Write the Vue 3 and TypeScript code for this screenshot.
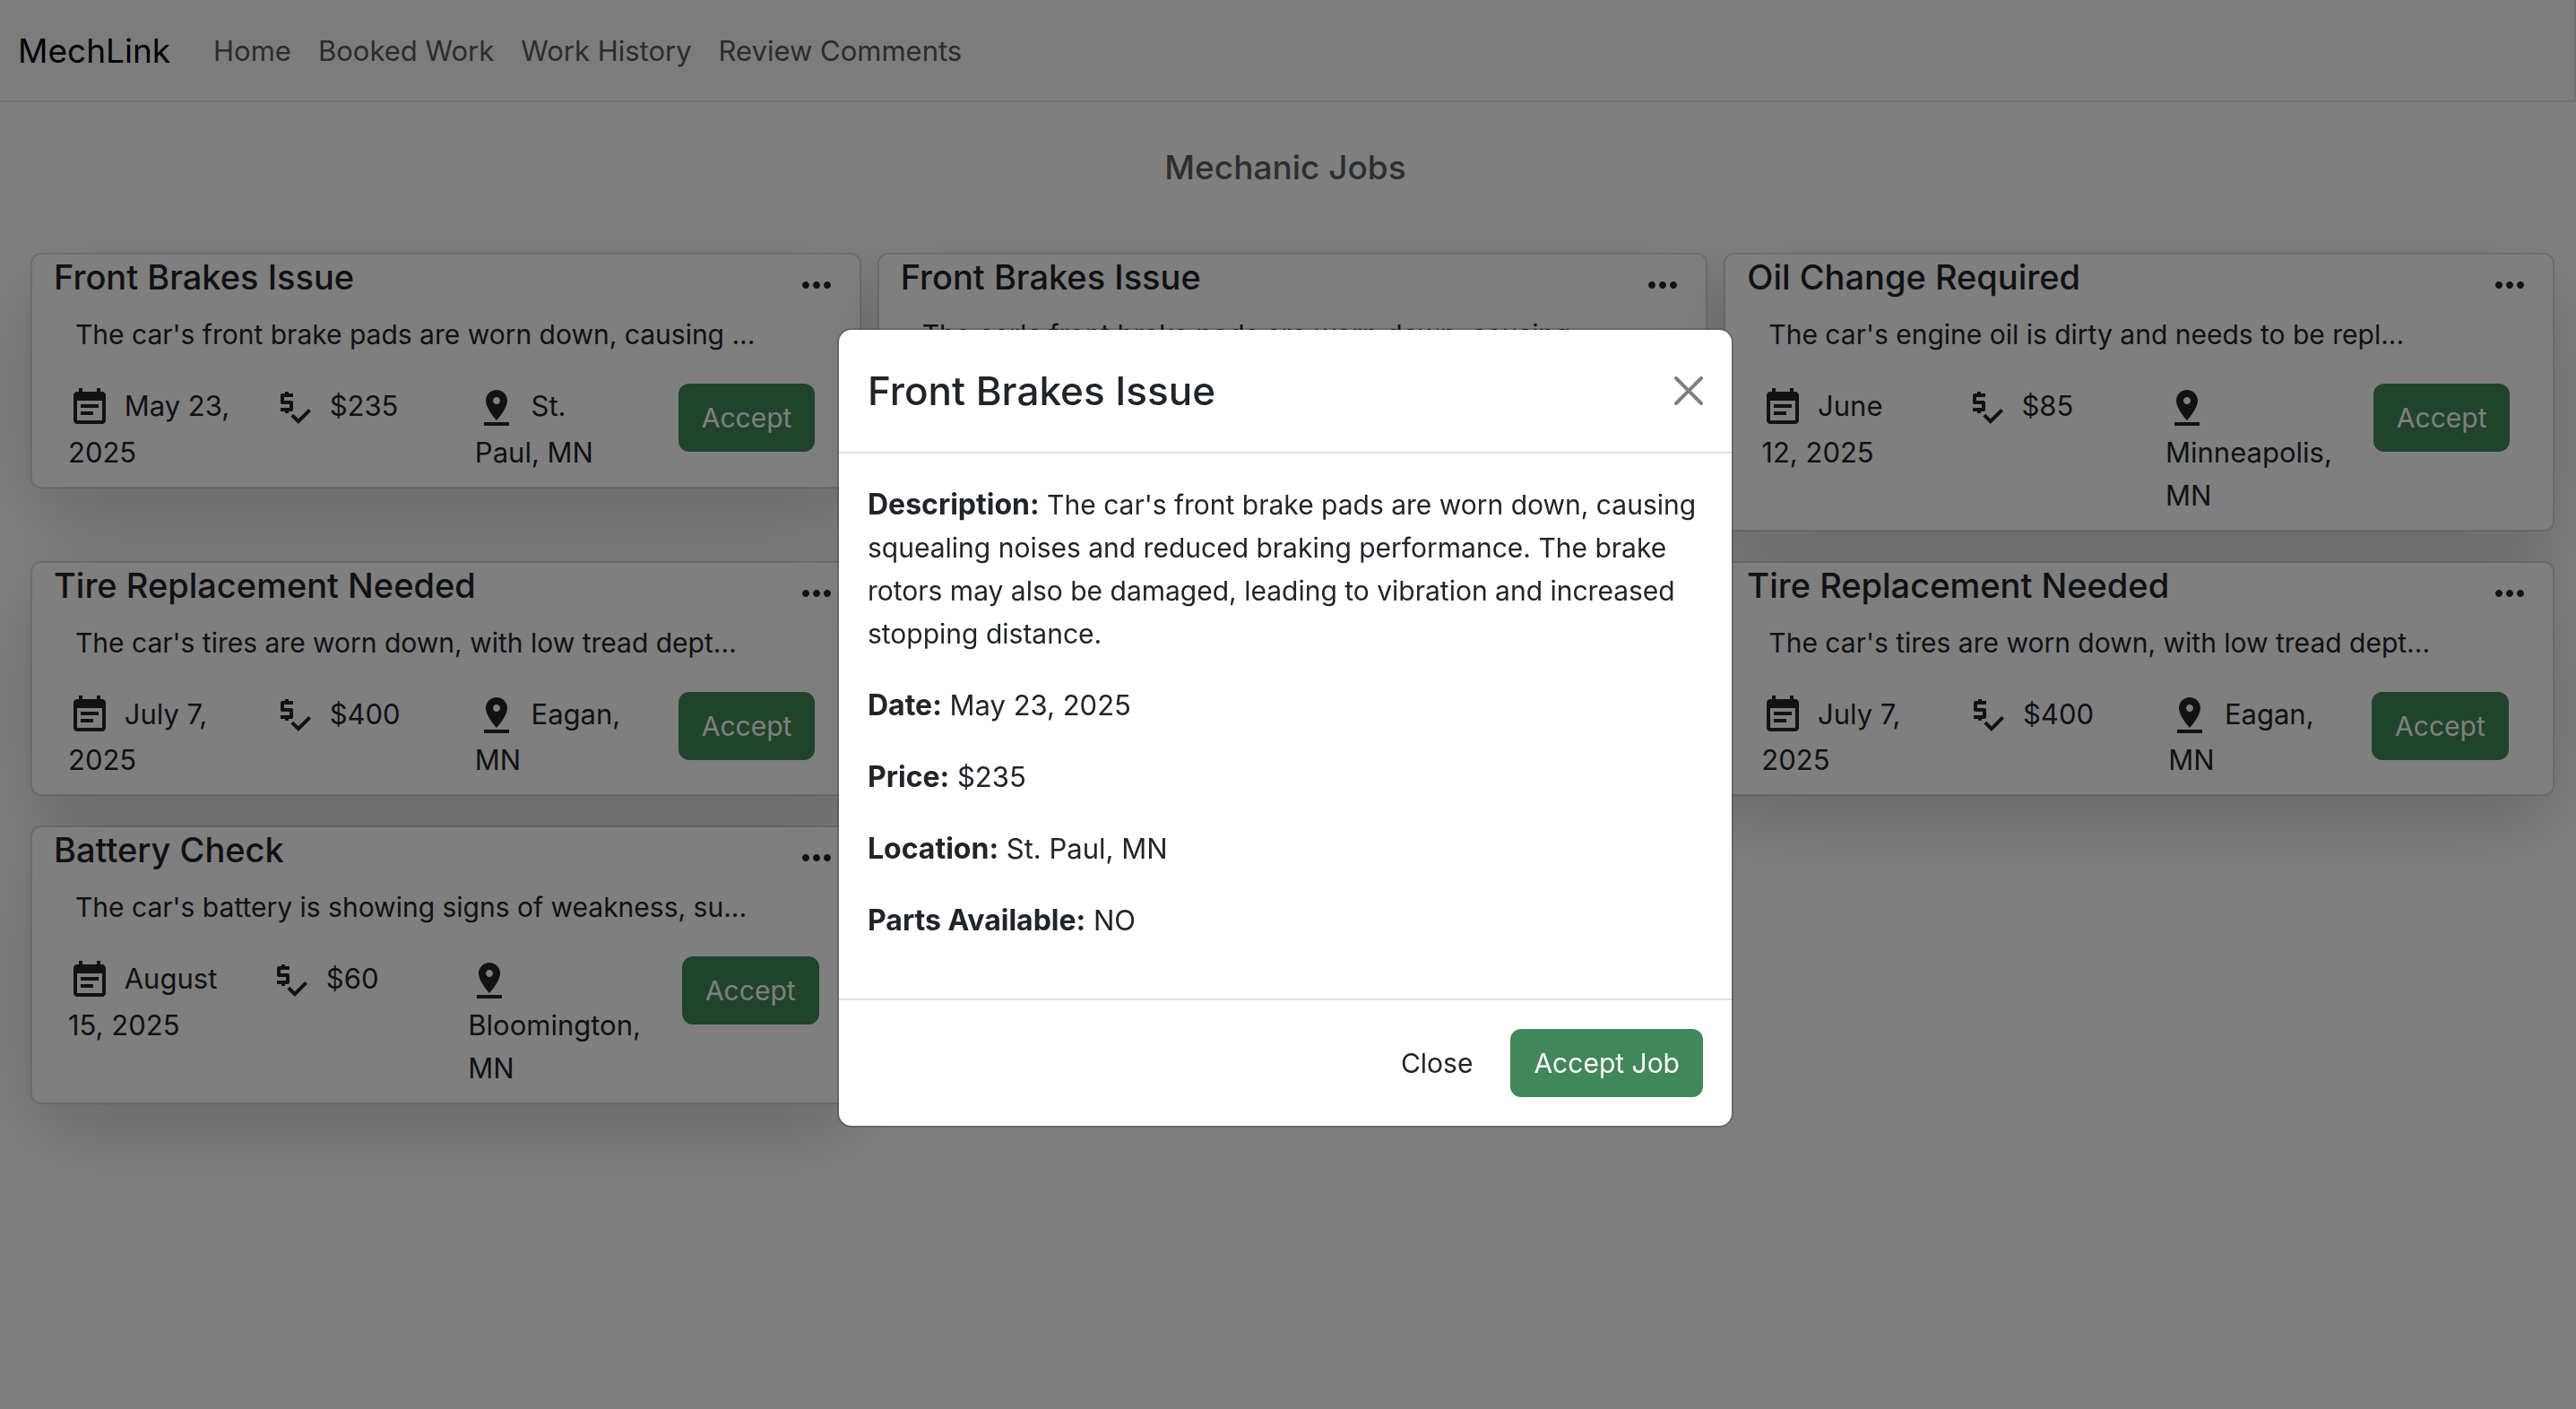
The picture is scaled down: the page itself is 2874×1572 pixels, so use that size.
<script setup lang="ts">
import { ref } from 'vue'

interface Job {
  id: number
  title: string
  summary: string
  date: string
  price: string
  location: string
}

const links: string[] = ['Home', 'Booked Work', 'Work History', 'Review Comments']

const brakes = "The car's front brake pads are worn down, causing ..."
const tires = "The car's tires are worn down, with low tread dept..."

const jobs: Job[] = [
  { id: 1, title: 'Front Brakes Issue', summary: brakes, date: 'May 23, 2025', price: '$235', location: 'St. Paul, MN' },
  { id: 2, title: 'Front Brakes Issue', summary: brakes, date: 'May 23, 2025', price: '$235', location: 'St. Paul, MN' },
  { id: 3, title: 'Oil Change Required', summary: "The car's engine oil is dirty and needs to be repl...", date: 'June 12, 2025', price: '$85', location: 'Minneapolis, MN' },
  { id: 4, title: 'Tire Replacement Needed', summary: tires, date: 'July 7, 2025', price: '$400', location: 'Eagan, MN' },
  { id: 5, title: 'Tire Replacement Needed', summary: tires, date: 'July 7, 2025', price: '$400', location: 'Eagan, MN' },
  { id: 6, title: 'Tire Replacement Needed', summary: tires, date: 'July 7, 2025', price: '$400', location: 'Eagan, MN' },
  { id: 7, title: 'Battery Check', summary: "The car's battery is showing signs of weakness, su...", date: 'August 15, 2025', price: '$60', location: 'Bloomington, MN' },
]

const details: { label: string; value: string }[] = [
  {
    label: 'Description:',
    value:
      "The car's front brake pads are worn down, causing squealing noises and reduced braking performance. The brake rotors may also be damaged, leading to vibration and increased stopping distance.",
  },
  { label: 'Date:', value: 'May 23, 2025' },
  { label: 'Price:', value: '$235' },
  { label: 'Location:', value: 'St. Paul, MN' },
  { label: 'Parts Available:', value: 'NO' },
]

const open = ref(true)
</script>

<template>
  <div class="page">
    <nav class="navbar">
      <a class="brand" href="#">MechLink</a>
      <a v-for="link in links" :key="link" class="nav-link" href="#">{{ link }}</a>
    </nav>

    <main>
      <h1 class="heading">Mechanic Jobs</h1>
      <section class="jobs">
        <article v-for="job in jobs" :key="job.id" class="card">
          <header class="card-head">
            <h2 class="card-title">{{ job.title }}</h2>
            <button class="more" type="button" aria-label="Details" @click="open = true">
              <svg class="icon" viewBox="0 0 24 24" aria-hidden="true">
                <path d="M6 10c-1.1 0-2 .9-2 2s.9 2 2 2 2-.9 2-2-.9-2-2-2zm12 0c-1.1 0-2 .9-2 2s.9 2 2 2 2-.9 2-2-.9-2-2-2zm-6 0c-1.1 0-2 .9-2 2s.9 2 2 2 2-.9 2-2-.9-2-2-2z" />
              </svg>
            </button>
          </header>
          <p class="summary">{{ job.summary }}</p>
          <div class="facts">
            <div class="fact date">
              <svg class="icon" viewBox="0 0 24 24" aria-hidden="true">
                <path d="M17 10H7v2h10v-2zm2-7h-1V1h-2v2H8V1H6v2H5c-1.11 0-1.99.9-1.99 2L3 19c0 1.1.89 2 2 2h14c1.1 0 2-.9 2-2V5c0-1.1-.9-2-2-2zm0 16H5V8h14v11zm-5-5H7v2h7v-2z" />
              </svg>
              {{ job.date }}
            </div>
            <div class="fact price">
              <svg class="icon" viewBox="0 0 24 24" aria-hidden="true">
                <path d="M11 13V9c0-.55-.45-1-1-1H6V6h5V4H8.5V3h-2v1H5c-.55 0-1 .45-1 1v4c0 .55.45 1 1 1h4v2H4v2h2.5v1h2v-1H10c.55 0 1-.45 1-1zm8.59-.48-5.66 5.65-2.83-2.83-1.41 1.42L13.93 21 21 13.93l-1.41-1.41z" />
              </svg>
              {{ job.price }}
            </div>
            <div class="fact location">
              <svg class="icon" viewBox="0 0 24 24" aria-hidden="true">
                <path d="M18 8c0-3.31-2.69-6-6-6S6 4.69 6 8c0 4.5 6 11 6 11s6-6.5 6-11zm-8 0c0-1.1.9-2 2-2s2 .9 2 2-.89 2-2 2c-1.1 0-2-.9-2-2zM5 20v2h14v-2H5z" />
              </svg>
              {{ job.location }}
            </div>
            <div class="action">
              <button class="btn success" type="button">Accept</button>
            </div>
          </div>
        </article>
      </section>
    </main>

    <div v-if="open" class="backdrop">
      <div class="modal" role="dialog" aria-modal="true" aria-labelledby="job-title">
        <header class="modal-head">
          <h2 id="job-title" class="modal-title">Front Brakes Issue</h2>
          <button class="close" type="button" aria-label="Close" @click="open = false">
            <svg viewBox="0 0 16 16" aria-hidden="true">
              <path d="M.293.293a1 1 0 0 1 1.414 0L8 6.586 14.293.293a1 1 0 1 1 1.414 1.414L9.414 8l6.293 6.293a1 1 0 0 1-1.414 1.414L8 9.414l-6.293 6.293a1 1 0 0 1-1.414-1.414L6.586 8 .293 1.707a1 1 0 0 1 0-1.414z" />
            </svg>
          </button>
        </header>
        <div class="modal-body">
          <p v-for="d in details" :key="d.label"><strong>{{ d.label }}</strong> {{ d.value }}</p>
        </div>
        <footer class="modal-foot">
          <button class="btn" type="button" @click="open = false">Close</button>
          <button class="btn success" type="button">Accept Job</button>
        </footer>
      </div>
    </div>
  </div>
</template>

<style>
body {
  margin: 0;
  background: #fff;
}
</style>

<style scoped>
.page {
  min-height: 100vh;
  font-family: Inter, 'Liberation Sans', sans-serif;
  font-size: 31px;
  line-height: 48px;
  color: #212529;
}

.page *,
.page {
  box-sizing: border-box;
}

h1,
h2,
p {
  margin: 0;
}

button {
  font: inherit;
  color: inherit;
  cursor: pointer;
}

.navbar {
  display: flex;
  align-items: center;
  gap: 30px;
  height: 114px;
  padding: 2px 0 0 20px;
  background: #f8f8f8;
  border-right: 2px solid #e2e2e2;
  border-bottom: 2px solid #e2e2e2;
}

.brand {
  margin-right: 18px;
  font-size: 37px;
  color: #000;
  text-decoration: none;
}

.nav-link {
  color: #595959;
  text-decoration: none;
}

.heading {
  padding: 49px 6px 49px 0;
  font-size: 37px;
  font-weight: 500;
  line-height: 48px;
  text-align: center;
  color: #5a5d60;
}

.jobs {
  display: grid;
  grid-template-columns: repeat(3, 1fr);
  align-items: start;
  gap: 33px 18px;
  padding: 22px 24px 40px 34px;
}

.card {
  position: relative;
  min-width: 0;
  padding: 1px 0 14px;
  background: #fff;
  background-clip: padding-box;
  border: 2px solid rgba(0, 0, 0, 0.125);
  border-radius: 12px;
  box-shadow: 0 32px 96px rgba(0, 0, 0, 0.175);
}

.card-head {
  display: flex;
  justify-content: space-between;
  height: 64px;
  padding: 0 24px;
}

.card-title {
  font-size: 38px;
  font-weight: 500;
  line-height: 48px;
}

.more {
  height: 48px;
  margin-top: 9px;
  padding: 0;
  border: 0;
  background: none;
}

.more .icon {
  display: block;
}

.icon {
  width: 48px;
  height: 48px;
  fill: currentColor;
}

.summary {
  padding: 0 48px;
  margin-bottom: 31px;
  font-size: 30px;
  white-space: nowrap;
}

.facts {
  display: flex;
  align-items: flex-start;
  padding-left: 40px;
}

.fact {
  min-width: 0;
  padding: 1px 44px 0 0;
}

.fact .icon {
  margin: 0 6px 2px 0;
  vertical-align: middle;
}

.date {
  flex: 1 1 229px;
}

.price {
  flex: 1 1 225px;
}

.location {
  flex: 1 1 227px;
  min-width: min-content;
  padding-right: 46px;
}

.action {
  flex: 1 1 202px;
}

.btn {
  height: 76px;
  padding: 0 26px;
  border: 0;
  border-radius: 12px;
  background: none;
  font-size: 30px;
}

.success {
  background: #418759;
  color: #fff;
}

.backdrop {
  position: fixed;
  inset: 0;
  display: flex;
  align-items: flex-start;
  justify-content: center;
  padding: 366px 6px 0 0;
  background: rgba(0, 0, 0, 0.5);
}

.modal {
  width: 1000px;
  background: #fff;
  background-clip: padding-box;
  border: 2px solid rgba(0, 0, 0, 0.175);
  border-radius: 16px;
}

.modal-head {
  display: flex;
  align-items: center;
  justify-content: space-between;
  padding: 32px;
  border-bottom: 2px solid #dee2e6;
}

.modal-title {
  font-size: 44px;
  font-weight: 500;
  line-height: 72px;
}

.close {
  width: 32px;
  height: 32px;
  padding: 0;
  border: 0;
  background: none;
  opacity: 0.5;
  color: #000;
}

.close svg {
  display: block;
  fill: currentColor;
}

.modal-body {
  padding: 33px 32px 31px;
}

.modal-body p {
  margin-bottom: 32px;
}

.modal-body p:first-child {
  font-size: 30px;
}

.modal-body strong {
  font-size: 32px;
  line-height: 1;
}

.modal-foot {
  display: flex;
  justify-content: flex-end;
  gap: 16px;
  padding: 32px;
  border-top: 2px solid #dee2e6;
}
</style>
